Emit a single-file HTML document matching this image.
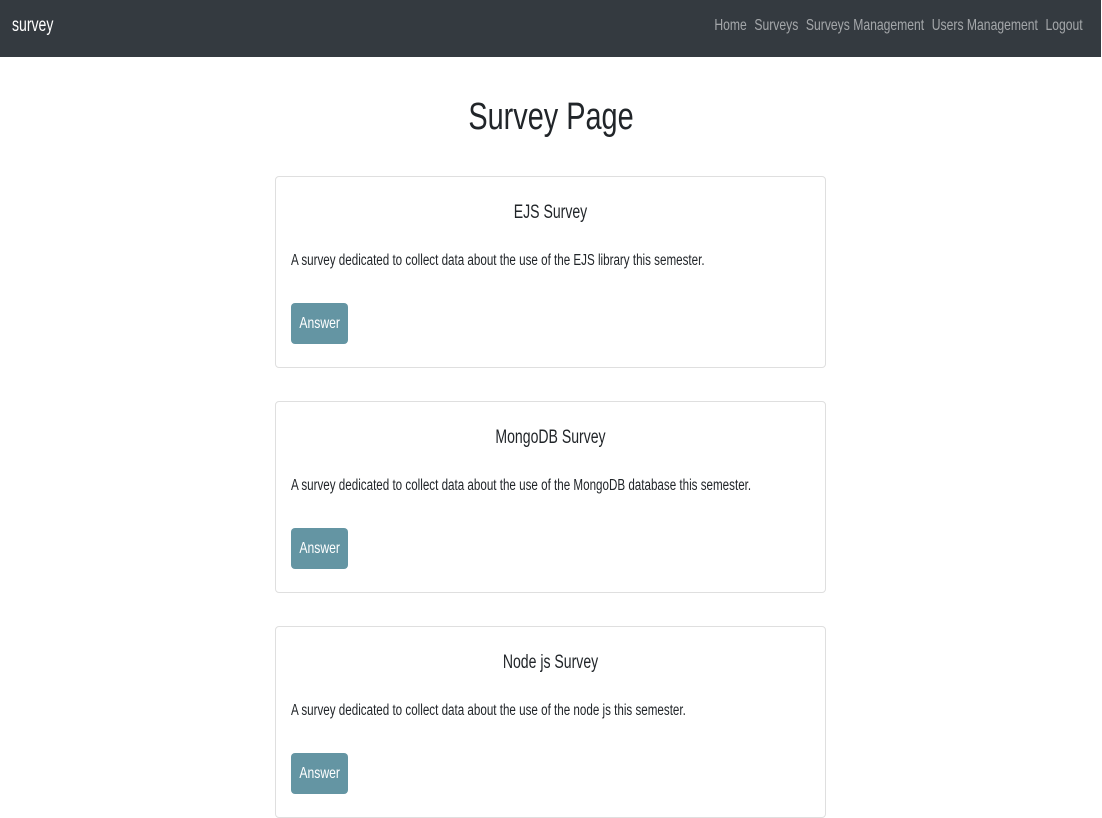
<!DOCTYPE html>
<html><head><meta charset="utf-8"><style>
*{box-sizing:border-box;margin:0;padding:0}
body{width:1102px;height:811px;overflow:hidden;background:#fff;font-family:"Liberation Sans",sans-serif;color:#212529;position:relative}
.nav{position:absolute;left:0;top:0;width:1101px;height:57px;background:#343a40}
.brand{position:absolute;left:12px;top:15px;color:#fff;font-size:19px;transform:scaleX(0.74);transform-origin:left}
.links{position:absolute;right:18px;top:17px;font-size:16px;color:rgba(255,255,255,.55);white-space:nowrap;transform:scaleX(0.76);transform-origin:right}
.links span{margin-left:10px}
h1{position:absolute;left:0;width:1102px;top:96px;text-align:center;font-size:38px;font-weight:400;transform:scaleX(0.76)}
.card{position:absolute;left:275px;width:551px;height:192px;border:1px solid #dfdfdf;border-radius:4px}
.card h5{position:absolute;left:0;width:100%;top:25px;text-align:center;font-size:19px;font-weight:400;transform:scaleX(0.74)}
.card p{position:absolute;left:15px;top:75px;font-size:15.5px;white-space:nowrap;transform:scaleX(0.75);transform-origin:left}
.btn{position:absolute;left:15px;top:126px;width:57px;height:41px;background:#6495a3;border-radius:4px;color:#fff;font-size:16px;text-align:center;line-height:41px}
.btn span{display:inline-block;transform:scaleX(0.76)}
</style></head><body>
<div class="nav"><div class="brand">survey</div>
<div class="links"><span>Home</span><span>Surveys</span><span>Surveys Management</span><span>Users Management</span><span>Logout</span></div></div>
<h1>Survey Page</h1>
<div class="card" style="top:176px"><h5>EJS Survey</h5><p>A survey dedicated to collect data about the use of the EJS library this semester.</p><div class="btn"><span>Answer</span></div></div>
<div class="card" style="top:401px"><h5>MongoDB Survey</h5><p>A survey dedicated to collect data about the use of the MongoDB database this semester.</p><div class="btn"><span>Answer</span></div></div>
<div class="card" style="top:626px"><h5>Node js Survey</h5><p>A survey dedicated to collect data about the use of the node js this semester.</p><div class="btn"><span>Answer</span></div></div>
</body></html>
